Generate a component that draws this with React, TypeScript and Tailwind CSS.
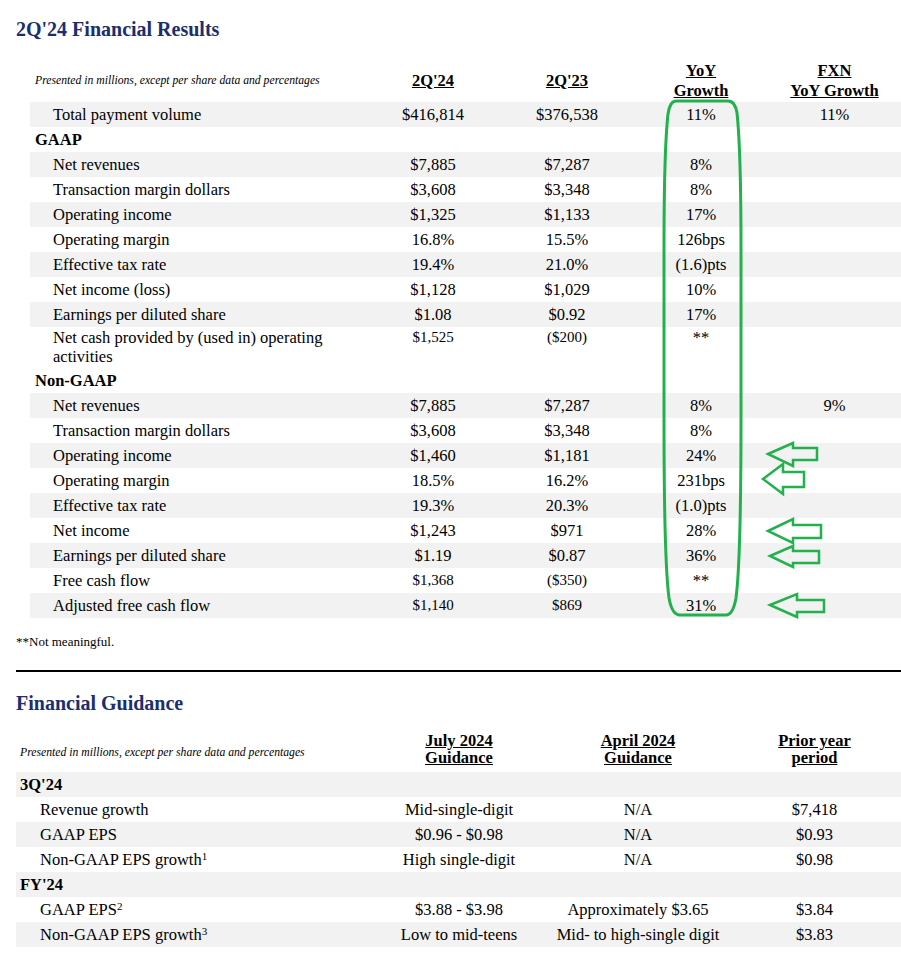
import React from 'react'

type ResultRow = {
  label: string
  head?: boolean
  a?: string
  b?: string
  c?: string
  d?: string
  small?: boolean
  tall?: boolean
  shade?: boolean
}

const results: ResultRow[] = [
  { label: 'Total payment volume', a: '$416,814', b: '$376,538', c: '11%', d: '11%', shade: true },
  { label: 'GAAP', head: true },
  { label: 'Net revenues', a: '$7,885', b: '$7,287', c: '8%', shade: true },
  { label: 'Transaction margin dollars', a: '$3,608', b: '$3,348', c: '8%' },
  { label: 'Operating income', a: '$1,325', b: '$1,133', c: '17%', shade: true },
  { label: 'Operating margin', a: '16.8%', b: '15.5%', c: '126bps' },
  { label: 'Effective tax rate', a: '19.4%', b: '21.0%', c: '(1.6)pts', shade: true },
  { label: 'Net income (loss)', a: '$1,128', b: '$1,029', c: '10%' },
  { label: 'Earnings per diluted share', a: '$1.08', b: '$0.92', c: '17%', shade: true },
  { label: 'Net cash provided by (used in) operating activities', a: '$1,525', b: '($200)', c: '**', small: true, tall: true },
  { label: 'Non-GAAP', head: true },
  { label: 'Net revenues', a: '$7,885', b: '$7,287', c: '8%', d: '9%', shade: true },
  { label: 'Transaction margin dollars', a: '$3,608', b: '$3,348', c: '8%' },
  { label: 'Operating income', a: '$1,460', b: '$1,181', c: '24%', shade: true },
  { label: 'Operating margin', a: '18.5%', b: '16.2%', c: '231bps' },
  { label: 'Effective tax rate', a: '19.3%', b: '20.3%', c: '(1.0)pts', shade: true },
  { label: 'Net income', a: '$1,243', b: '$971', c: '28%' },
  { label: 'Earnings per diluted share', a: '$1.19', b: '$0.87', c: '36%', shade: true },
  { label: 'Free cash flow', a: '$1,368', b: '($350)', c: '**', small: true },
  { label: 'Adjusted free cash flow', a: '$1,140', b: '$869', c: '31%', small: true, shade: true },
]

type GuideRow = { label: string; sup?: string; head?: boolean; a?: string; b?: string; c?: string; shade?: boolean }

const guidance: GuideRow[] = [
  { label: "3Q'24", head: true, shade: true },
  { label: 'Revenue growth', a: 'Mid-single-digit', b: 'N/A', c: '$7,418' },
  { label: 'GAAP EPS', a: '$0.96 - $0.98', b: 'N/A', c: '$0.93', shade: true },
  { label: 'Non-GAAP EPS growth', sup: '1', a: 'High single-digit', b: 'N/A', c: '$0.98' },
  { label: "FY'24", head: true, shade: true },
  { label: 'GAAP EPS', sup: '2', a: '$3.88 - $3.98', b: 'Approximately $3.65', c: '$3.84' },
  { label: 'Non-GAAP EPS growth', sup: '3', a: 'Low to mid-teens', b: 'Mid- to high-single digit', c: '$3.83', shade: true },
]

// left-pointing hollow arrows drawn over the table: tip, head x, head top/bottom, shaft top/bottom, shaft end
const arrows = [
  { tx: 768, ty: 454, hx: 793, ht: 443, hb: 466, st: 448, sb: 460, sx: 817 },
  { tx: 763, ty: 479, hx: 783, ht: 464, hb: 494, st: 472, sb: 487, sx: 804 },
  { tx: 768, ty: 531, hx: 793, ht: 519, hb: 543, st: 525, sb: 538, sx: 821 },
  { tx: 770, ty: 556, hx: 793, ht: 546, hb: 567, st: 551, sb: 563, sx: 819 },
  { tx: 770, ty: 605, hx: 797, ht: 594, hb: 617, st: 600, sb: 612, sx: 824 },
]

function Annotations() {
  return (
    <svg className="absolute left-0 top-0 pointer-events-none" width={901} height={960} viewBox="0 0 901 960">
      <path
        d="M676 101 L728 101 Q735 101 737 113 Q741 150 741 250 L741 420 Q741 560 736 598 Q733 615 726 615 L680 615 Q672 615 669 598 Q664 560 664 420 L664 250 Q664 150 668 114 Q670 101 676 101 Z"
        fill="none"
        stroke="#22b14c"
        strokeWidth={3}
      />
      {arrows.map((a, i) => (
        <polygon
          key={i}
          points={`${a.tx},${a.ty} ${a.hx},${a.ht} ${a.hx},${a.st} ${a.sx},${a.st} ${a.sx},${a.sb} ${a.hx},${a.sb} ${a.hx},${a.hb}`}
          fill="none"
          stroke="#22b14c"
          strokeWidth={2.5}
          strokeLinejoin="miter"
        />
      ))}
    </svg>
  )
}

function ResultsTable() {
  return (
    <div className="ml-[30px] w-[871px]">
      <div className="flex h-[42px] items-center font-bold text-[16.5px] leading-[20px]">
        <div className="w-[336px] pl-[5px] italic font-normal text-[11.7px]">
          Presented in millions, except per share data and percentages
        </div>
        <div className="w-[134px] text-center"><span className="underline">2Q'24</span></div>
        <div className="w-[134px] text-center"><span className="underline">2Q'23</span></div>
        <div className="w-[134px] text-center underline">YoY<br />Growth</div>
        <div className="w-[133px] text-center underline">FXN<br />YoY Growth</div>
      </div>
      {results.map((r, i) =>
        r.head ? (
          <div key={i} className="h-[25px] leading-[25px] pl-[5px] font-bold text-[16.5px]">{r.label}</div>
        ) : (
          <div
            key={i}
            className={`flex text-[16.5px] ${r.tall ? 'h-[41px] pt-px leading-[19px]' : 'h-[25px] leading-[25px]'} ${r.shade ? 'bg-[#f2f2f2]' : ''}`}
          >
            <div className="w-[336px] pl-[23px]">
              {r.tall ? (<>Net cash provided by (used in) operating<br />activities</>) : r.label}
            </div>
            <div className={`w-[134px] text-center ${r.small ? 'text-[15px]' : ''}`}>{r.a}</div>
            <div className={`w-[134px] text-center ${r.small ? 'text-[15px]' : ''}`}>{r.b}</div>
            <div className="w-[134px] text-center">{r.c}</div>
            <div className="w-[133px] text-center">{r.d}</div>
          </div>
        )
      )}
    </div>
  )
}

function GuidanceTable() {
  return (
    <div className="ml-4 w-[885px]">
      <div className="flex h-[41px] items-start pt-px font-bold text-[16.5px] leading-[17px]">
        <div className="self-center w-[354px] pl-1 italic font-normal text-[11.7px]">
          Presented in millions, except per share data and percentages
        </div>
        <div className="w-[178px] text-center underline">July 2024<br />Guidance</div>
        <div className="w-[180px] text-center underline">April 2024<br />Guidance</div>
        <div className="w-[173px] text-center underline">Prior year<br />period</div>
      </div>
      {guidance.map((r, i) => (
        <div key={i} className={`flex h-[25px] leading-[25px] text-[16.5px] ${r.shade ? 'bg-[#f2f2f2]' : ''}`}>
          {r.head ? (
            <div className="pl-1 font-bold">{r.label}</div>
          ) : (
            <>
              <div className="w-[354px] pl-6">
                {r.label}
                {r.sup && <sup className="text-[11px]">{r.sup}</sup>}
              </div>
              <div className="w-[178px] text-center">{r.a}</div>
              <div className="w-[180px] text-center">{r.b}</div>
              <div className="w-[173px] text-center">{r.c}</div>
            </>
          )}
        </div>
      ))}
    </div>
  )
}

export default function App() {
  return (
    <div className="relative w-[901px] h-[960px] bg-white text-black font-['Liberation_Serif',serif] overflow-hidden">
      <h1 className="pl-4 pt-[17px] text-[20px] leading-[24px] font-bold text-[#1b2f6e]">2Q'24 Financial Results</h1>
      <div className="mt-[19px]">
        <ResultsTable />
      </div>
      <p className="pl-4 mt-[16px] text-[13px] leading-[16px]">**Not meaningful.</p>
      <div className="ml-4 mt-[20px] h-[2px] bg-black" />
      <h2 className="pl-4 mt-[19px] text-[20px] leading-[24px] font-bold text-[#1b2f6e]">Financial Guidance</h2>
      <div className="mt-[16px]">
        <GuidanceTable />
      </div>
      <Annotations />
    </div>
  )
}
